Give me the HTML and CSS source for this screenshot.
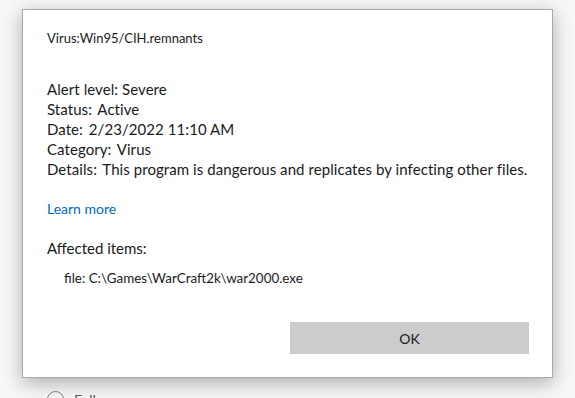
FILE: index.html
```html
<!DOCTYPE html>
<html lang="en">
	<head>
		<meta charset="UTF-8" />
		<title>Threat details</title>
		<link rel="stylesheet" href="styles.css">
	</head>
	<body>
		<div class="dialog">
			<div class="threat-name">Virus:Win95/CIH.remnants</div>

			<div class="details">
				<div>Alert level: Severe</div>
				<div>Status:&#8201; Active</div>
				<div>Date:&#8201; 2/23/2022 11:10 AM</div>
				<div>Category:&#8201; Virus</div>
				<div>Details:&#8201; This program is dangerous and replicates by infecting other files.</div>
			</div>

			<a class="learn-more" href="#">Learn more</a>

			<div class="affected-label">Affected items:</div>
			<div class="affected-file">file: C:\Games\WarCraft2k\war2000.exe</div>

			<div class="dialog-actions">
				<button class="btn-ok">OK</button>
			</div>
		</div>

		<div class="behind-row">
			<span class="radio"></span>
			<span>Follow</span>
		</div>
	</body>
</html>
```

FILE: styles.css
```css
body {
	margin: 0;
	padding: 9px 0 0 22px;
	background: #f7f7f7;
	font-family: 'Lato', 'Open Sans', sans-serif;
	color: #1a1a1a;
	overflow: hidden;
}

.dialog {
	box-sizing: border-box;
	width: 531px;
	height: 369px;
	background: white;
	border: 1px solid #a8a8a8;
	box-shadow: 0 5px 18px rgba(0, 0, 0, 0.3);
	padding: 18px 23px 0 24px;
	display: flex;
	flex-direction: column;
	align-items: flex-start;
}

.threat-name {
	font-size: 13px;
	line-height: 20px;
}

.details {
	margin-top: 31px;
	font-size: 15px;
	line-height: 20px;
	letter-spacing: 0.07px;
}

.learn-more {
	margin-top: 20px;
	font-size: 14px;
	line-height: 20px;
	color: #0067c0;
	text-decoration: none;
}

.affected-label {
	margin-top: 19px;
	font-size: 15px;
	line-height: 20px;
}

.affected-file {
	margin-top: 10px;
	padding-left: 17px;
	font-size: 13.4px;
	line-height: 20px;
}

.dialog-actions {
	margin-top: 34px;
	align-self: stretch;
	display: flex;
	justify-content: flex-end;
}

.btn-ok {
	width: 239px;
	height: 32px;
	border: none;
	background: #cccccc;
	font-family: inherit;
	font-size: 14px;
	color: #1a1a1a;
}

.behind-row {
	display: flex;
	align-items: center;
	gap: 10px;
	margin: 13px 0 0 25px;
	font-size: 14px;
	color: #555;
}

.radio {
	width: 15px;
	height: 15px;
	border: 1px solid #777;
	border-radius: 50%;
}
```
